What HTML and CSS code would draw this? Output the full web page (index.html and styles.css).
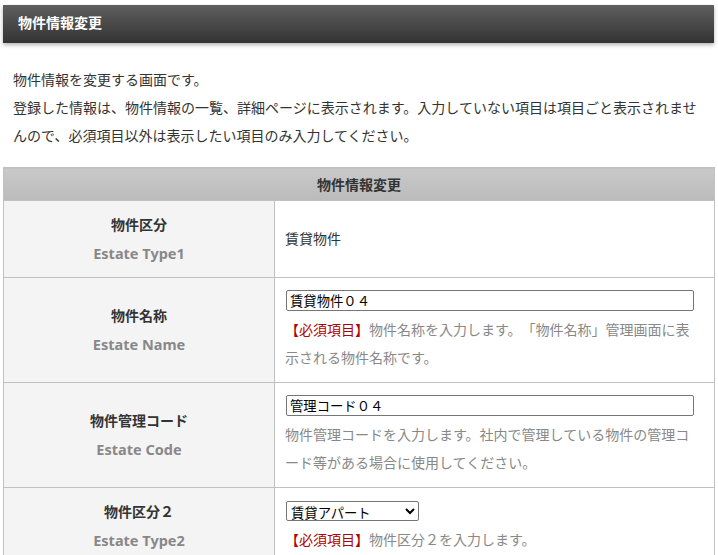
FILE: index.html
```html
<!DOCTYPE html>
<html lang="ja">
<head>
<meta charset="utf-8">
<title>物件情報変更</title>
<link rel="stylesheet" href="styles.css">
</head>
<body>
<div class="page">
  <h1 class="title-bar">物件情報変更</h1>
  <div class="intro">
    <p>物件情報を変更する画面です。</p>
    <p>登録した情報は、物件情報の一覧、詳細ページに表示されます。入力していない項目は項目ごと表示されませんので、必須項目以外は表示したい項目のみ入力してください。</p>
  </div>
  <table class="form-table">
    <colgroup>
      <col class="col-label">
      <col class="col-value">
    </colgroup>
    <thead>
      <tr><th colspan="2" class="table-head">物件情報変更</th></tr>
    </thead>
    <tbody>
      <tr>
        <th class="label"><span class="jp">物件区分</span><span class="en">Estate Type1</span></th>
        <td class="value">賃貸物件</td>
      </tr>
      <tr>
        <th class="label"><span class="jp">物件名称</span><span class="en">Estate Name</span></th>
        <td class="value">
          <div class="field"><input class="text-input" type="text" value="賃貸物件０４"></div>
          <p class="note"><span class="req">【必須項目】</span>物件名称を入力します。「物件名称」管理画面に表示される物件名称です。</p>
        </td>
      </tr>
      <tr>
        <th class="label"><span class="jp">物件管理コード</span><span class="en">Estate Code</span></th>
        <td class="value">
          <div class="field"><input class="text-input" type="text" value="管理コード０４"></div>
          <p class="note">物件管理コードを入力します。社内で管理している物件の管理コード等がある場合に使用してください。</p>
        </td>
      </tr>
      <tr>
        <th class="label"><span class="jp">物件区分２</span><span class="en">Estate Type2</span></th>
        <td class="value">
          <div class="field"><select class="select-input"><option>賃貸アパート</option><option>賃貸マンション</option></select></div>
          <p class="note"><span class="req">【必須項目】</span>物件区分２を入力します。</p>
        </td>
      </tr>
    </tbody>
  </table>
</div>
</body>
</html>
```
FILE: styles.css
```css
html, body {
  margin: 0;
  padding: 0;
  background: #fff;
}
body {
  font-family: "Noto Sans", "Noto Sans CJK JP", sans-serif;
  font-size: 14px;
  color: #333;
  text-spacing-trim: space-all;
}
.page {
  padding: 5px 4px 0 3px;
}
.title-bar {
  margin: 0;
  height: 38px;
  line-height: 36px;
  padding-left: 15px;
  font-size: 14px;
  font-weight: bold;
  color: #fff;
  background: linear-gradient(#5f5f5f, #333333);
  box-shadow: 0 2px 4px rgba(0, 0, 0, 0.3);
}
.intro {
  margin-top: 23px;
  padding-left: 10px;
  padding-right: 10px;
  line-height: 28px;
}
.intro p {
  margin: 0;
}
.form-table {
  margin-top: 17px;
  width: 711px;
  border-collapse: collapse;
  table-layout: fixed;
}
.col-label {
  width: 271px;
}
.col-value {
  width: 440px;
}
.form-table th,
.form-table td {
  border: 1px solid #c0c0c0;
}
.table-head {
  height: 32px;
  padding: 0;
  font-weight: bold;
  text-align: center;
  line-height: 31px;
  background: linear-gradient(#c9c9c9, #bbbbbb);
  border-color: #b4b4b4;
}
.label {
  padding: 10px;
  background: #f4f4f4;
  text-align: center;
  vertical-align: middle;
  line-height: 28px;
  font-weight: bold;
}
.label .jp,
.label .en {
  display: block;
}
.label .en {
  color: #888;
  font-size: 14.5px;
}
.value {
  padding: 10px 20px 10px 10px;
  vertical-align: middle;
  line-height: 28px;
}
.field {
  height: 28px;
  display: flex;
  align-items: center;
}
.text-input {
  box-sizing: border-box;
  width: 408px;
  height: 21px;
  margin: -3px 0 0 1px;
  padding: 1px 3px;
  border: 1px solid #767676;
  border-radius: 2px;
  font-family: "Noto Sans CJK JP", sans-serif;
  font-size: 13.33px;
  color: #000;
}
.select-input {
  box-sizing: border-box;
  width: 133px;
  height: 20px;
  margin: -2px 0 0 1px;
  font-family: "Noto Sans CJK JP", sans-serif;
  font-size: 13.33px;
  color: #000;
  border: 1px solid #767676;
  border-radius: 2px;
  background: #fff;
}
.note {
  margin: 0;
  color: #888;
}
.req {
  color: #b00000;
}
```
